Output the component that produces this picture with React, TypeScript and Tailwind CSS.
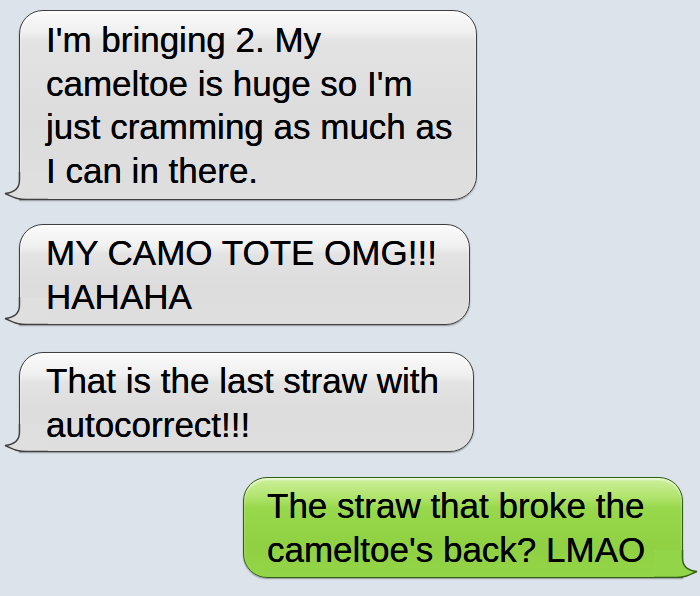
import React from 'react';

type Side = 'left' | 'right';

// little curved tail drawn under the bottom corner of a bubble
function Tail({ side, fill, stroke }: { side: Side; fill: string; stroke: string }) {
  const pos = side === 'left' ? '-left-[16px]' : '-right-[16px] -scale-x-100';
  return (
    <svg
      className={`absolute -bottom-[1px] ${pos}`}
      width="44"
      height="28"
      viewBox="0 0 44 28"
    >
      <path
        d="M15.5 0 V8 C15.5 16 11 20.5 1 21.5 C6 23 9 27.5 22 27.5 H44 V0 Z"
        fill={fill}
      />
      <path
        d="M15.5 0 V8 C15.5 16 11 20.5 1 21.5 C6 23 9 27.5 22 27.5 H44"
        fill="none"
        stroke={stroke}
        strokeWidth="1.4"
      />
    </svg>
  );
}

function GrayBubble({ lines, width, className }: { lines: string[]; width: string; className: string }) {
  return (
    <div
      className={`relative ml-[19px] ${width} ${className} rounded-[24px] rounded-bl-none border border-[#3f3f3f] bg-[linear-gradient(to_bottom,#fafafa_0px,#efefef_22px,#e3e3e3_30px,#dcdcdc_60%,#dfdfdf_100%)] pl-[26px] shadow-[inset_0_2px_2px_rgba(255,255,255,0.9),0_1px_1.5px_rgba(0,0,0,0.35)]`}
    >
      <Tail side="left" fill="#dfdfdf" stroke="#3f3f3f" />
      <div className="relative text-[35px] leading-[43.5px] text-black [text-shadow:0_0_0.6px_#000]">
        {lines.map((l) => (
          <div key={l} className="whitespace-nowrap">{l}</div>
        ))}
      </div>
    </div>
  );
}

export default function App() {
  return (
    <div className="flex h-[596px] w-[700px] flex-col overflow-hidden bg-[#dde3ea] pt-[10px] font-['Liberation_Sans',Arial,sans-serif]">
      <GrayBubble
        width="w-[458px]"
        className="pt-[7px] pb-[7px]"
        lines={["I'm bringing 2. My", "cameltoe is huge so I'm", 'just cramming as much as', 'I can in there.']}
      />
      <GrayBubble
        width="w-[451px]"
        className="mt-[24px] pt-[6px] pb-[6px]"
        lines={['MY CAMO TOTE OMG!!!', 'HAHAHA']}
      />
      <GrayBubble
        width="w-[455px]"
        className="mt-[27px] pt-[6px] pb-[5px]"
        lines={['That is the last straw with', 'autocorrect!!!']}
      />

      <div className="relative mt-[25px] mr-[17px] w-[440px] self-end rounded-[24px] rounded-br-none border border-[#335e17] bg-[linear-gradient(to_bottom,#cdf09c_0px,#afe36b_20px,#98d84c_30px,#8fd142_70%,#93d548_100%)] pt-[6px] pb-[6px] pl-[23px] shadow-[inset_0_2px_2px_rgba(255,255,255,0.6),0_1px_1.5px_rgba(0,0,0,0.35)]">
        <Tail side="right" fill="#93d548" stroke="#335e17" />
        <div className="relative text-[35px] leading-[43.5px] text-black [text-shadow:0_0_0.6px_#000]">
          <div className="whitespace-nowrap">The straw that broke the</div>
          <div className="whitespace-nowrap">cameltoe's back? LMAO</div>
        </div>
      </div>
    </div>
  );
}
